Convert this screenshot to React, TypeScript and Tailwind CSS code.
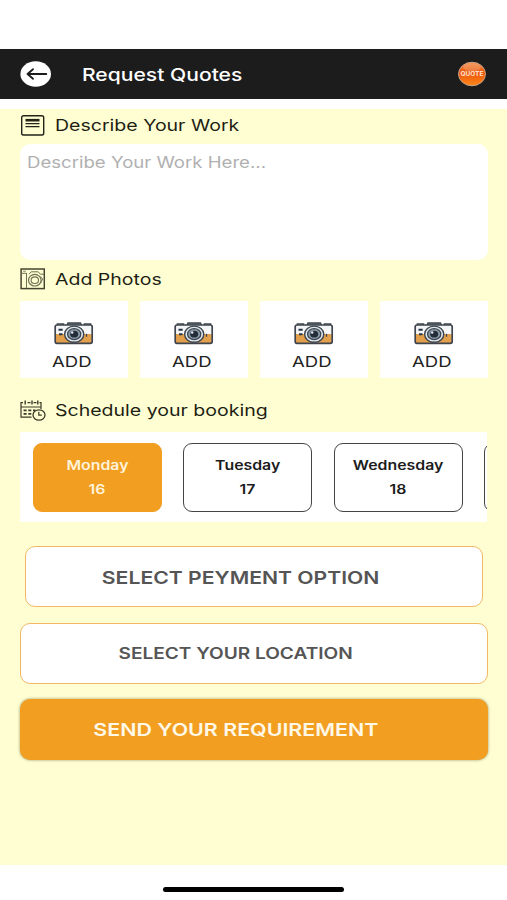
import clsx from 'clsx';

const photos = [1, 2, 3, 4];

const days = [
  { name: 'Monday', date: 16, active: true },
  { name: 'Tuesday', date: 17, active: false },
  { name: 'Wednesday', date: 18, active: false },
];

function BackIcon() {
  return (
    <svg width="31" height="26" viewBox="0 0 31 26" fill="none">
      <ellipse cx="15.7" cy="13" rx="15.3" ry="12.7" fill="#fff" />
      <path
        d="M26.3 13H7.500M13 8.200L7.500 13l5.500 4.800"
        stroke="#1c1c1c"
        strokeWidth="1.8"
        strokeLinecap="round"
        strokeLinejoin="round"
      />
    </svg>
  );
}

function QuoteBadge() {
  return (
    <svg width="30" height="26" viewBox="0 0 30 26">
      <defs>
        <linearGradient id="badge" x1="0" y1="0" x2="0" y2="1">
          <stop offset="0" stopColor="#f08a45" />
          <stop offset="0.45" stopColor="#ec5508" />
          <stop offset="1" stopColor="#ff8a1c" />
        </linearGradient>
      </defs>
      <ellipse cx="15" cy="13" rx="13.5" ry="11.8" fill="url(#badge)" stroke="#c9a088" strokeWidth="1" />
      <ellipse cx="15" cy="6.2" rx="9" ry="4" fill="#fff" opacity="0.18" />
      <text
        x="15"
        y="15.4"
        textAnchor="middle"
        textLength="23"
        lengthAdjust="spacingAndGlyphs"
        fontFamily="Inter, sans-serif"
        fontSize="6.2"
        fontWeight="800"
        fill="#ffd9bd"
      >
        QUOTE
      </text>
    </svg>
  );
}

function NoteIcon() {
  return (
    <svg width="25" height="21" viewBox="0 0 25 21" fill="none" stroke="#23231a">
      <rect x="1.7" y="0.8" width="22" height="19.2" rx="1.8" strokeWidth="1.4" />
      <path d="M5.500 5.200h14" strokeWidth="2.6" />
      <path d="M5.500 8.700h14M5.500 11.700h14" strokeWidth="1.3" />
    </svg>
  );
}

function PhotoIcon() {
  return (
    <svg width="25" height="22" viewBox="0 0 25 22" fill="none" stroke="#6f7152">
      <rect x="1.1" y="1" width="23.2" height="19.6" stroke="#45452f" strokeWidth="1.5" />
      <path d="M1 5.300h5.500M6.500 5v15M9 6.200l2.200-2.400h7l2.200 2.400H24" strokeWidth="1" />
      <path d="M3 3.200h3" strokeWidth="0.8" />
      <ellipse cx="14.8" cy="12.2" rx="6.3" ry="5.8" strokeWidth="1.2" />
      <ellipse cx="14.8" cy="12.2" rx="3.7" ry="3.3" strokeWidth="1.1" />
      <path d="M20.500 8.500l2.200 2.500-2 4" strokeWidth="0.9" />
    </svg>
  );
}

function CalendarIcon() {
  return (
    <svg width="26" height="21" viewBox="0 0 26 21" fill="none" stroke="#3a3a28">
      <path d="M3 2.700H1v14.500h10.500M7.500 2.700h3M13.500 2.700h3M19.500 2.700H21v6.600" strokeWidth="1.2" />
      <path d="M5.200.6v4M12 .6v4M17.800.6v4" strokeWidth="1.4" />
      <path d="M1 7h20" strokeWidth="1" />
      <path d="M3.600 10.400h3M8.300 10.400h3M13 10.400h2.400M3.600 13.900h3M8.300 13.900h3" strokeWidth="1.9" />
      <ellipse cx="19" cy="15" rx="6" ry="5.2" strokeWidth="1.3" />
      <path d="M18.800 11.800v3.400h3" strokeWidth="1.2" />
    </svg>
  );
}

function CameraIcon() {
  return (
    <svg width="40" height="24" viewBox="0 0 40 24">
      <path d="M3.500 4V3h6v1M30.500 4V3h6v1" fill="none" stroke="#3f454e" strokeWidth="1.6" />
      <path d="M12.800 4.500L14 2h12.500l1.200 2.500z" fill="#7d848c" stroke="#3f454e" strokeWidth="1.3" />
      <rect x="1.2" y="4" width="37" height="18.400" rx="1.8" fill="#f4f6f8" />
      <path d="M1.800 13h36v9h-36z" fill="#e3a04c" />
      <rect x="1.2" y="4" width="37" height="18.400" rx="1.8" fill="none" stroke="#3f454e" strokeWidth="1.7" />
      <path d="M4.500 8.700h4.200M5 13.200h3.500" stroke="#2c3542" strokeWidth="1.9" />
      <path d="M32.500 12.800v3" stroke="#3f454e" strokeWidth="1.3" />
      <ellipse cx="20.200" cy="13.200" rx="9.600" ry="8.100" fill="#dde7ee" stroke="#3f454e" strokeWidth="1.4" />
      <ellipse cx="20.200" cy="13.200" rx="6.600" ry="5.500" fill="#8b9cab" stroke="#3f454e" strokeWidth="1.3" />
      <ellipse cx="20.200" cy="13.200" rx="4" ry="3.400" fill="#232c38" />
      <circle cx="18.200" cy="11.500" r="1.2" fill="#e6eef4" />
    </svg>
  );
}

interface SectionTitleProps {
  icon: React.ReactNode;
  title: string;
}

function SectionTitle({ icon, title }: SectionTitleProps) {
  return (
    <div className="flex h-6 items-center">
      <div className="w-[35px]">{icon}</div>
      <h2 className="origin-left scale-x-[1.22] text-[16px] whitespace-nowrap text-[#1e1e14]">{title}</h2>
    </div>
  );
}

export default function App() {
  return (
    <div className="flex h-[900px] w-[507px] flex-col overflow-hidden bg-white font-['Inter',sans-serif]">
      <header className="mt-[49px] flex h-[50px] shrink-0 items-center bg-[#1c1c1c] pr-5 pl-5">
        <BackIcon />
        <h1 className="ml-[31px] origin-left scale-x-[1.22] pt-0.5 text-[17.3px] font-medium whitespace-nowrap text-white">
          Request Quotes
        </h1>
        <div className="ml-auto">
          <QuoteBadge />
        </div>
      </header>

      <main className="mt-2.5 h-[756px] shrink-0 bg-[#fefed2] px-5 pt-1">
        <SectionTitle icon={<NoteIcon />} title="Describe Your Work" />
        <div className="mt-[7px] mr-[-1px] h-[116px] rounded-[10px] bg-white px-[7px] pt-[7px]">
          <p className="w-fit origin-left scale-x-[1.17] text-[15.9px] whitespace-nowrap text-[#b0b0b0]">
            Describe Your Work Here...
          </p>
        </div>

        <div className="mt-[7px]">
          <SectionTitle icon={<PhotoIcon />} title="Add Photos" />
        </div>
        <div className="mt-[10px] flex gap-3">
          {photos.map((photo) => (
            <div key={photo} className="flex h-[77px] w-[108px] shrink-0 flex-col items-center bg-white pt-5">
              <CameraIcon />
              <span className="mt-[7px] mr-[5px] scale-x-[1.25] text-[14.8px] leading-5 text-[#222]">ADD</span>
            </div>
          ))}
        </div>

        <div className="mt-5">
          <SectionTitle icon={<CalendarIcon />} title="Schedule your booking" />
        </div>
        <div className="mt-[10px] flex h-[90px] gap-[21.5px] overflow-hidden bg-white pt-[11px] pl-[12.5px]">
          {days.map((day) => (
            <div
              key={day.name}
              className={clsx(
                'flex h-[69px] w-[129px] shrink-0 flex-col items-center rounded-[9px] border pt-[9px] text-[13px] leading-6 font-semibold',
                day.active ? 'border-[#f19e21] bg-[#f19e21] text-[#fff3d9]' : 'border-[#444] bg-white text-[#1c1c1c]',
              )}
            >
              <span className="scale-x-[1.22]">{day.name}</span>
              <span className="scale-x-[1.22]">{day.date}</span>
            </div>
          ))}
          {/* edge of the next day, hints that the row scrolls */}
          <div className="h-[69px] w-[129px] shrink-0 rounded-[9px] border border-[#444] bg-white" />
        </div>

        <button className="mx-[5px] mt-6 flex h-[61px] w-[458px] items-center justify-center rounded-[10px] border border-[#f3b864] bg-white pt-[3px] pr-[27px] text-[#555]">
          <span className="scale-x-[1.19] text-[17.8px] font-semibold whitespace-nowrap">SELECT PEYMENT OPTION</span>
        </button>
        <button className="mt-4 flex h-[61px] w-[468px] items-center justify-center rounded-[10px] border border-[#f3b864] bg-white pr-9 text-[#555]">
          <span className="scale-x-[1.2] text-[15.9px] font-semibold whitespace-nowrap">SELECT YOUR LOCATION</span>
        </button>
        <button className="mt-[15px] flex h-[61px] w-[468px] items-center justify-center rounded-[10px] bg-[#f19e21] pt-0.5 pr-9 text-[#fff8e6] shadow-[0_0_3px_rgba(90,80,30,0.6)]">
          <span className="scale-x-[1.21] text-[17.7px] font-semibold whitespace-nowrap">SEND YOUR REQUIREMENT</span>
        </button>
      </main>

      <div className="mx-auto mt-[22px] h-[5px] w-[181px] shrink-0 rounded-full bg-black" />
    </div>
  );
}
